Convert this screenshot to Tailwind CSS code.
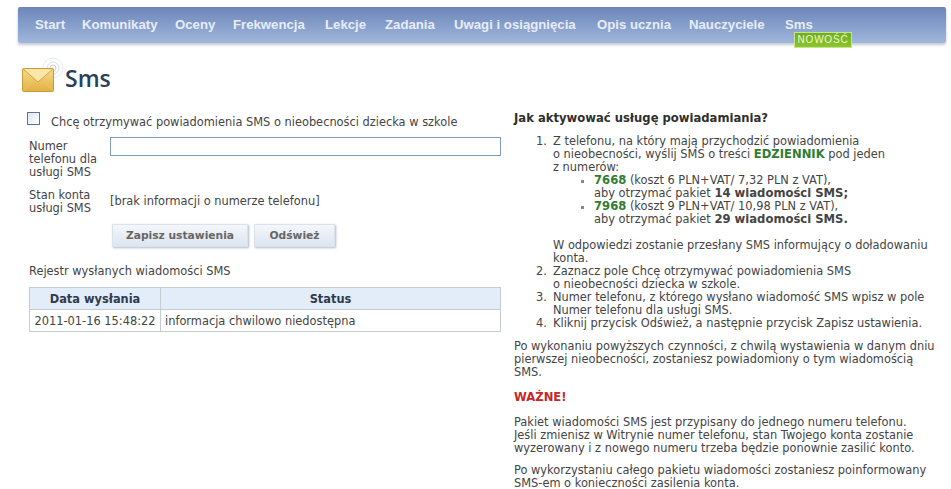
<!DOCTYPE html>
<html><head><meta charset="utf-8"><script src="https://cdn.jsdelivr.net/npm/@tailwindcss/browser@4"></script></head>
<body class="bg-white h-[489px] w-[951px] overflow-hidden font-['DejaVu_Sans',sans-serif] text-[11.4px] leading-[13px] text-[#444]">
<nav class="mx-[18px] mt-[7px] w-[928px] h-[36px] rounded-[2px] bg-gradient-to-b from-[#6d86b8] to-[#a0b6dc] shadow-[0_2px_3px_rgba(120,130,150,0.45)] flex items-start pl-[17px] gap-[18px] pt-[10px] font-['Liberation_Sans',sans-serif] font-bold text-[13.2px] leading-[16px] text-[#e6edf8] whitespace-nowrap">
<a class="w-[29px]">Start</a><a class="w-[75px]">Komunikaty</a><a class="w-[40px]">Oceny</a><a class="w-[74px]">Frekwencja</a><a class="w-[42px]">Lekcje</a><a class="w-[51px]">Zadania</a><a class="w-[125px]">Uwagi i osiągnięcia</a><a class="w-[74px]">Opis ucznia</a><a class="w-[78px]">Nauczyciele</a>
<a class="relative">Sms<span class="absolute left-[9px] top-[15px] w-[58px] h-[16px] bg-gradient-to-b from-[#6fae1c] to-[#8cc62c] border border-[#c6e48c] text-[#eef7dc] text-[10px] leading-[14px] font-normal text-center tracking-[0.8px]">NOWOŚĆ</span></a>
</nav>
<header class="flex items-end ml-[22px] mt-[13px] h-[36px]">
<svg width="43" height="36" viewBox="0 0 43 36" class="shrink-0">
<defs><linearGradient id="e" x1="0" y1="0" x2="0" y2="1"><stop offset="0" stop-color="#f6dc8c"/><stop offset="1" stop-color="#e2b042"/></linearGradient></defs>
<g fill="none" stroke="#c9d3dc" stroke-width="1"><circle cx="31" cy="12" r="3"/><circle cx="31" cy="12" r="6" stroke="#d8dfe6"/><circle cx="31" cy="12" r="10" stroke="#e6ebf0"/></g>
<rect x="0.5" y="12.5" width="31" height="23" rx="1" fill="url(#e)" stroke="#c99a38"/>
<path d="M1 13 L16 26 L31 13" fill="#f9e6a8" stroke="#d2a546" stroke-width="1"/>
<path d="M1 35 L12 23 M31 35 L20 23" stroke="#e9c468" fill="none"/>
</svg>
<h1 class="-mb-[1px] font-['Open_Sans',sans-serif] font-semibold text-[23px] leading-[30px] text-[#2a3f5a]">Sms</h1>
</header>
<main class="flex mt-[20px]">
<section class="w-[472px] ml-[29px] shrink-0">
<div class="flex items-start -ml-[2px] pt-[1px]"><span class="w-[13px] h-[13px] mr-[11px] border border-[#5a7595] bg-gradient-to-br from-[#dfe6ee] to-white shrink-0 mt-[-1px]"></span><span class="pt-[3px]">Chcę otrzymywać powiadomienia SMS o nieobecności dziecka w szkole</span></div>
<div class="flex mt-[8px]"><div class="w-[81px] shrink-0 pt-[3px]">Numer<br>telefonu dla<br>usługi SMS</div><div class="w-[391px] h-[19px] border border-[#7f9db9]"></div></div>
<div class="flex mt-[10px] items-center"><div class="w-[81px] shrink-0">Stan konta<br>usługi SMS</div><div class="mt-[-1px]">[brak informacji o numerze telefonu]</div></div>
<div class="flex ml-[83px] mt-[9px] gap-[6px] text-[#666]">
<button class="w-[136px] h-[23px] bg-gradient-to-b from-[#f4f7fb] to-[#dde5f0] border border-[#dbe2ec] shadow-[1px_1px_2px_rgba(120,140,170,0.6)] font-bold text-[10.7px]">Zapisz ustawienia</button>
<button class="w-[81px] h-[23px] bg-gradient-to-b from-[#f4f7fb] to-[#dde5f0] border border-[#dbe2ec] shadow-[1px_1px_2px_rgba(120,140,170,0.6)] font-bold text-[10.7px]">Odśwież</button></div>
<p class="mt-[18px]">Rejestr wysłanych wiadomości SMS</p>
<table class="mt-[9px] w-[472px] border-collapse">
<thead><tr class="bg-[#e3edf9] text-[#2f3b4c] font-bold h-[22px]"><th class="w-[131px] border border-[#c5ccd4] pt-[1px]">Data wysłania</th><th class="border border-[#c5ccd4] pt-[1px]">Status</th></tr></thead>
<tbody><tr class="h-[22px]"><td class="border border-[#c5ccd4] text-center pt-[1px]">2011-01-16 15:48:22</td><td class="border border-[#c5ccd4] pl-[4px] pt-[1px]">informacja chwilowo niedostępna</td></tr></tbody>
</table>
</section>
<section class="ml-[13px] w-[425px] whitespace-nowrap">
<h2 class="font-bold text-[11.6px] text-[#2f2f2f]">Jak aktywować usługę powiadamiania?</h2>
<ol class="mt-[10px] ml-[22px]">
<li class="flex"><span class="w-[17px] shrink-0">1.</span><div>Z telefonu, na który mają przychodzić powiadomienia<br>o nieobecności, wyślij SMS o treści <b class="text-[#2e7d32] text-[11.6px]">EDZIENNIK</b> pod jeden<br>z numerów:
<ul class="ml-[41px] list-[square] marker:text-[#888] marker:text-[11px]">
<li><b class="text-[#2e7d32] text-[11.6px]">7668</b> (koszt 6 PLN+VAT/ 7,32 PLN z VAT),<br>aby otrzymać pakiet <b class="text-[11.6px]">14 wiadomości SMS;</b></li>
<li><b class="text-[#2e7d32] text-[11.6px]">7968</b> (koszt 9 PLN+VAT/ 10,98 PLN z VAT),<br>aby otrzymać pakiet <b class="text-[11.6px]">29 wiadomości SMS.</b></li>
</ul>
<p class="mt-[13px]">W odpowiedzi zostanie przesłany SMS informujący o doładowaniu<br>konta.</p></div></li>
<li class="flex"><span class="w-[17px] shrink-0">2.</span><div>Zaznacz pole Chcę otrzymywać powiadomienia SMS<br>o nieobecności dziecka w szkole.</div></li>
<li class="flex"><span class="w-[17px] shrink-0">3.</span><div>Numer telefonu, z którego wysłano wiadomość SMS wpisz w pole<br>Numer telefonu dla usługi SMS.</div></li>
<li class="flex"><span class="w-[17px] shrink-0">4.</span><div>Kliknij przycisk Odśwież, a następnie przycisk Zapisz ustawienia.</div></li>
</ol>
<p class="mt-[10px]">Po wykonaniu powyższych czynności, z chwilą wystawienia w danym dniu<br>pierwszej nieobecności, zostaniesz powiadomiony o tym wiadomością<br>SMS.</p>
<p class="mt-[12px] font-bold text-[11.6px] text-[#c62828]">WAŻNE!</p>
<p class="mt-[12px]">Pakiet wiadomości SMS jest przypisany do jednego numeru telefonu.<br>Jeśli zmienisz w Witrynie numer telefonu, stan Twojego konta zostanie<br>wyzerowany i z nowego numeru trzeba będzie ponownie zasilić konto.</p>
<p class="mt-[9px]">Po wykorzystaniu całego pakietu wiadomości zostaniesz poinformowany<br>SMS-em o konieczności zasilenia konta.</p>
</section>
</main>
</body></html>
